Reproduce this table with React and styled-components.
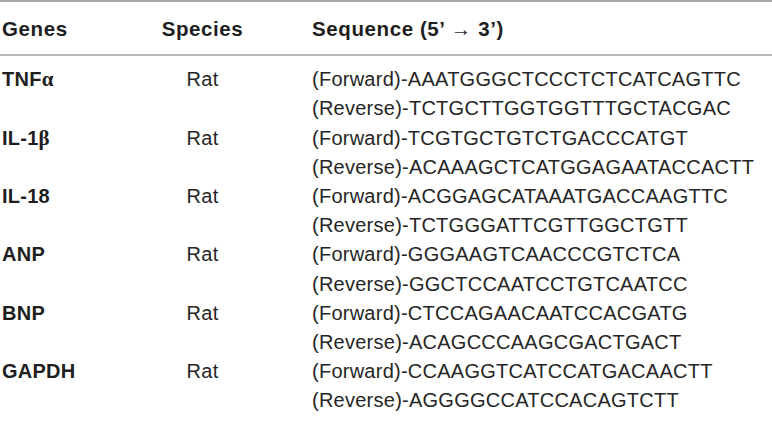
import React from 'react'
import styled, { createGlobalStyle } from 'styled-components'

const GlobalStyle = createGlobalStyle`
  html, body {
    margin: 0;
    padding: 0;
    background: #ffffff;
  }
  body {
    font-family: "Liberation Sans", Arial, sans-serif;
    color: #262626;
  }
`

const primers = [
  {
    gene: 'TNF',
    greek: 'α',
    species: 'Rat',
    forward: 'AAATGGGCTCCCTCTCATCAGTTC',
    reverse: 'TCTGCTTGGTGGTTTGCTACGAC',
  },
  {
    gene: 'IL-1',
    greek: 'β',
    species: 'Rat',
    forward: 'TCGTGCTGTCTGACCCATGT',
    reverse: 'ACAAAGCTCATGGAGAATACCACTT',
  },
  {
    gene: 'IL-18',
    species: 'Rat',
    forward: 'ACGGAGCATAAATGACCAAGTTC',
    reverse: 'TCTGGGATTCGTTGGCTGTT',
  },
  {
    gene: 'ANP',
    species: 'Rat',
    forward: 'GGGAAGTCAACCCGTCTCA',
    reverse: 'GGCTCCAATCCTGTCAATCC',
  },
  {
    gene: 'BNP',
    species: 'Rat',
    forward: 'CTCCAGAACAATCCACGATG',
    reverse: 'ACAGCCCAAGCGACTGACT',
  },
  {
    gene: 'GAPDH',
    species: 'Rat',
    forward: 'CCAAGGTCATCCATGACAACTT',
    reverse: 'AGGGGCCATCCACAGTCTT',
  },
]

const App = () => {
  return (
    <React.Fragment>
      <GlobalStyle />
      <Table>
        <HeaderRow>
          <GeneCell>Genes</GeneCell>
          <SpeciesCell>Species</SpeciesCell>
          <SequenceCell>Sequence (5’ → 3’)</SequenceCell>
        </HeaderRow>
        <Body>
          {primers.map((it, index) => {
            return (
              <Row key={`primer-${index}`}>
                <GeneCell bold>
                  {it.gene}
                  {it.greek && <Greek>{it.greek}</Greek>}
                </GeneCell>
                <SpeciesCell>{it.species}</SpeciesCell>
                <SequenceCell>
                  <div>(Forward)-{it.forward}</div>
                  <div>(Reverse)-{it.reverse}</div>
                </SequenceCell>
              </Row>
            )
          })}
        </Body>
      </Table>
    </React.Fragment>
  )
}

const Table = styled.div`
  width: 772px;
  display: flex;
  flex-direction: column;
  border-top: 2px solid #a9a9a9;
  font-size: 20px;
  line-height: 29.2px;
`

const HeaderRow = styled.div`
  display: grid;
  grid-template-columns: 148px 105px 1fr;
  padding: 12px 0 11px 2px;
  border-bottom: 2px solid #b7b7b7;
  font-weight: bold;
  font-size: 20.5px;
  letter-spacing: 0.6px;
  color: #1e1e1e;
`

const Body = styled.div`
  display: flex;
  flex-direction: column;
  padding: 9px 0 0 2px;
  letter-spacing: 0.25px;
`

const Row = styled.div`
  display: grid;
  grid-template-columns: 148px 105px 1fr;
`

const GeneCell = styled.div`
  font-weight: ${(p) => (p.bold ? 'bold' : 'inherit')};
  color: #1e1e1e;
  white-space: nowrap;
`

const Greek = styled.span`
  font-family: "Liberation Serif", "Times New Roman", serif;
  font-weight: bold;
  font-size: 21px;
`

const SpeciesCell = styled.div`
  text-align: center;
`

const SequenceCell = styled.div`
  padding-left: 57px;
  white-space: nowrap;
`

export default App
